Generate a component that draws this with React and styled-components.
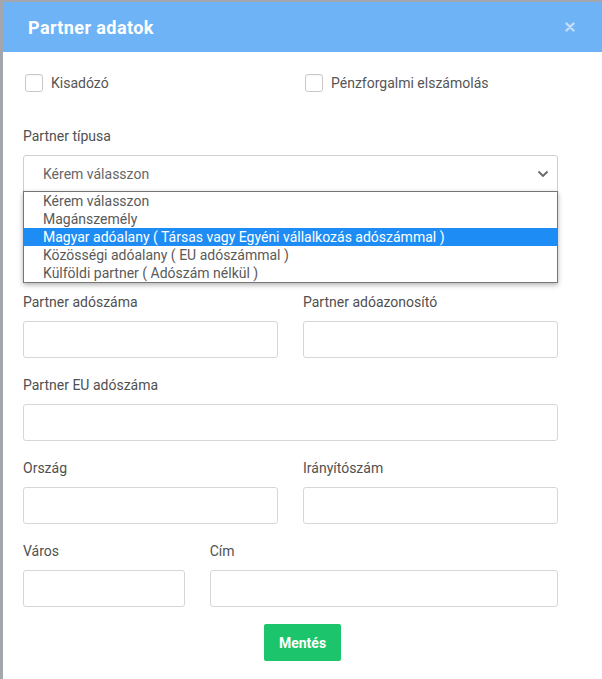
import React from "react";
import styled, { createGlobalStyle } from "styled-components";

const Global = createGlobalStyle`
  html, body { margin: 0; padding: 0; }
  body {
    background: #a3a6aa;
    font-family: Roboto, "Liberation Sans", Arial, sans-serif;
    -webkit-font-smoothing: antialiased;
  }
  * { box-sizing: border-box; }
`;

const Page = styled.div`
  padding: 2px 0 0 3px;
  height: 679px;
  overflow: hidden;
`;

const Modal = styled.div`
  background: #fff;
  width: 599px;
  height: 677px;
`;

const Header = styled.div`
  height: 50px;
  background: #6fb3f7;
  display: flex;
  align-items: center;
  justify-content: space-between;
  padding: 0 27px 0 25px;
`;

const Title = styled.h4`
  margin: 0;
  color: #fff;
  font-size: 18px;
  font-weight: 700;
  letter-spacing: 0.4px;
`;

const Close = styled.button`
  border: 0;
  background: none;
  padding: 0;
  width: 10px;
  height: 10px;
  display: flex;
  cursor: pointer;
`;

const Body = styled.div`
  padding: 22px 44px 0 20px;
  display: flex;
  flex-direction: column;
`;

const Grid = styled.div`
  display: grid;
  grid-template-columns: ${(p) => p.$cols || "1fr 1fr"};
  column-gap: 25px;
  margin-top: ${(p) => p.$mt || 17}px;
`;

const CheckRow = styled(Grid)`
  margin-top: 0;
`;

const CheckLabel = styled.label`
  display: flex;
  align-items: center;
  gap: 8px;
  padding-left: 2px;
  height: 18px;
  font-size: 14px;
  color: #555;
`;

const Box = styled.span`
  width: 18px;
  height: 18px;
  border: 1px solid #c9c9c9;
  border-radius: 3px;
  background: #fff;
  box-shadow: inset 0 1px 1px rgba(0, 0, 0, 0.04);
`;

const Field = styled.div`
  display: flex;
  flex-direction: column;
  position: relative;
`;

const Label = styled.div`
  font-size: 14px;
  line-height: 20px;
  color: #505050;
  margin-bottom: 9px;
`;

const Input = styled.div`
  height: 37px;
  border: 1px solid #d6d6d6;
  border-radius: 3px;
  background: #fff;
`;

const SelectWrap = styled.div`
  position: relative;
`;

const Select = styled.div`
  height: 37px;
  border: 1px solid #cfcfcf;
  border-radius: 3px 3px 0 0;
  background: #fff;
  display: flex;
  align-items: center;
  justify-content: space-between;
  padding: 0 8px 0 19px;
  font-size: 14px;
  color: #666;
`;

const List = styled.ul`
  position: absolute;
  left: 0;
  right: 0;
  top: 36px;
  margin: 0;
  padding: 0;
  list-style: none;
  background: #fff;
  border: 1px solid #767676;
  box-shadow: 0 2px 5px rgba(0, 0, 0, 0.3);
  z-index: 5;
`;

const Option = styled.li`
  height: 18px;
  line-height: 18px;
  padding-left: 19px;
  font-size: 14px;
  color: ${(p) => (p.$active ? "#fff" : "#5a5a5a")};
  background: ${(p) => (p.$active ? "#1e8cf5" : "transparent")};
  white-space: nowrap;
`;

const Footer = styled.div`
  display: flex;
  justify-content: center;
  margin: 17px -44px 0 -20px;
`;

const Save = styled.button`
  height: 37px;
  padding: 0 15px;
  border: 0;
  border-radius: 2px;
  background: #1cc46b;
  color: #fff;
  font-family: Roboto, "Liberation Sans", Arial, sans-serif;
  font-size: 14px;
  font-weight: 700;
`;

const options = [
  "Kérem válasszon",
  "Magánszemély",
  "Magyar adóalany ( Társas vagy Egyéni vállalkozás adószámmal )",
  "Közösségi adóalany ( EU adószámmal )",
  "Külföldi partner ( Adószám nélkül )",
];

const TextField = ({ label }) => (
  <Field>
    <Label>{label}</Label>
    <Input />
  </Field>
);

export default function App() {
  return (
    <Page>
      <Global />
      <Modal>
        <Header>
          <Title>Partner adatok</Title>
          <Close aria-label="close">
            <svg width="10" height="10" viewBox="0 0 10 10">
              <path
                d="M1.5 1.5 L8.5 8.5 M8.5 1.5 L1.5 8.5"
                stroke="#c3def9"
                strokeWidth="2.4"
                strokeLinecap="round"
              />
            </svg>
          </Close>
        </Header>
        <Body>
          <CheckRow>
            <CheckLabel>
              <Box />
              Kisadózó
            </CheckLabel>
            <CheckLabel>
              <Box />
              Pénzforgalmi elszámolás
            </CheckLabel>
          </CheckRow>

          <Grid $cols="1fr" $mt={34}>
            <Field>
              <Label>Partner típusa</Label>
              <SelectWrap>
                <Select>
                  Kérem válasszon
                  <svg width="12" height="8" viewBox="0 0 12 8">
                    <path
                      d="M1.5 1.5 L6 6 L10.5 1.5"
                      fill="none"
                      stroke="#666"
                      strokeWidth="1.8"
                    />
                  </svg>
                </Select>
                <List>
                  {options.map((o, i) => (
                    <Option key={o} $active={i === 2}>
                      {o}
                    </Option>
                  ))}
                </List>
              </SelectWrap>
            </Field>
          </Grid>

          <Grid $mt={100}>
            <TextField label="Partner adószáma" />
            <TextField label="Partner adóazonosító" />
          </Grid>

          <Grid $cols="1fr">
            <TextField label="Partner EU adószáma" />
          </Grid>

          <Grid>
            <TextField label="Ország" />
            <TextField label="Irányítószám" />
          </Grid>

          <Grid $cols="calc((100% + 25px) / 3 - 25px) 1fr">
            <TextField label="Város" />
            <TextField label="Cím" />
          </Grid>

          <Footer>
            <Save>Mentés</Save>
          </Footer>
        </Body>
      </Modal>
    </Page>
  );
}
